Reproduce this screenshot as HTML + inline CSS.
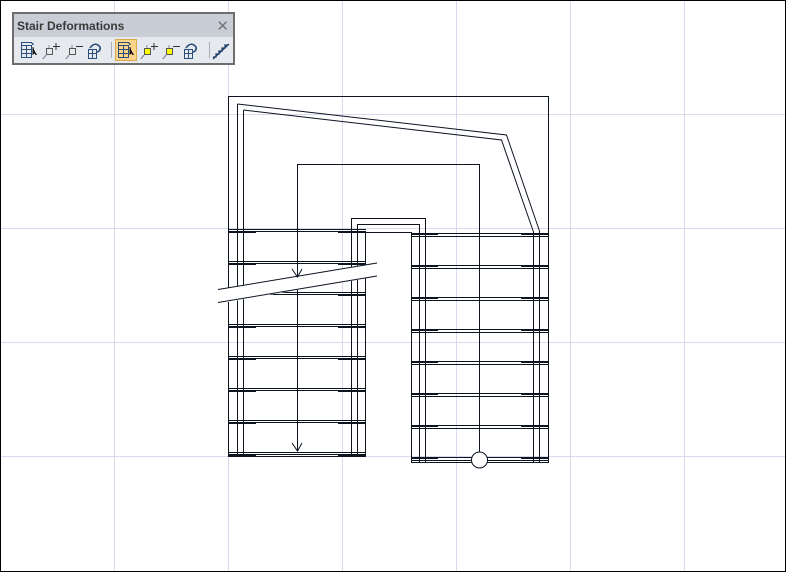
<!DOCTYPE html>
<html><head><style>
html,body{margin:0;padding:0;background:#fff;}
#c{position:absolute;left:0;top:0;width:786px;height:572px;}
#tb{position:absolute;left:12px;top:12px;width:219px;height:49px;border:2px solid #6e6e6e;background:#e6e9ee;}
#tt{position:absolute;left:0;top:0;width:219px;height:23px;background:#c9cdd6;font:bold 12px "Liberation Sans",sans-serif;color:#3a3a3a;line-height:25px;padding-left:3px;box-sizing:border-box;}
#x{position:absolute;right:4px;top:0;color:#777;font:15px "Liberation Sans",sans-serif;line-height:25px;}
</style></head><body>
<svg id="c" width="786" height="572" viewBox="0 0 786 572" shape-rendering="crispEdges">
<rect x="0.5" y="0.5" width="785" height="571" fill="#fff" stroke="#000"/>
<g stroke="#dcd8ee" stroke-width="1">
<line x1="114.5" y1="1" x2="114.5" y2="571"/><line x1="228.5" y1="1" x2="228.5" y2="571"/><line x1="342.5" y1="1" x2="342.5" y2="571"/><line x1="456.5" y1="1" x2="456.5" y2="571"/><line x1="570.5" y1="1" x2="570.5" y2="571"/><line x1="684.5" y1="1" x2="684.5" y2="571"/>
<line x1="1" y1="114.5" x2="785" y2="114.5"/><line x1="1" y1="228.5" x2="785" y2="228.5"/><line x1="1" y1="342.5" x2="785" y2="342.5"/><line x1="1" y1="456.5" x2="785" y2="456.5"/>
</g>
<g stroke="#0c1420" stroke-width="1" fill="none">
<polyline points="228.5,456 228.5,96.5 548.5,96.5 548.5,462"/>
<line x1="237.5" y1="104" x2="237.5" y2="456"/><line x1="243.5" y1="110" x2="243.5" y2="456"/>
<polyline shape-rendering="auto" points="237.5,104 506.5,135 539.5,231"/>
<polyline shape-rendering="auto" points="243.5,110 501.5,140 533.5,232"/>
<line x1="539.5" y1="231" x2="539.5" y2="462"/><line x1="533.5" y1="232" x2="533.5" y2="462"/>
<polyline points="351.5,456 351.5,218.5 425.5,218.5 425.5,462"/>
<polyline points="357.5,456 357.5,224.5 419.5,224.5 419.5,462"/>
<polyline points="365.5,456 365.5,232.5 411.5,232.5 411.5,462"/>
<polyline points="297.5,451 297.5,164.5 479.5,164.5 479.5,452"/>
<g id="lt">
<line x1="228" y1="229.5" x2="366" y2="229.5"/><line x1="228" y1="231.5" x2="366" y2="231.5"/>
<line x1="228" y1="232.5" x2="256" y2="232.5"/><line x1="338" y1="232.5" x2="366" y2="232.5"/>
</g>
<use href="#lt" y="32"/><use href="#lt" y="63"/><use href="#lt" y="95"/><use href="#lt" y="127"/><use href="#lt" y="159"/><use href="#lt" y="191"/><use href="#lt" y="223"/>
<line x1="228" y1="456.5" x2="366" y2="456.5"/>
<g id="rt">
<line x1="411" y1="233.5" x2="549" y2="233.5"/><line x1="411" y1="236.5" x2="549" y2="236.5"/>
<line x1="411" y1="234.5" x2="438" y2="234.5"/><line x1="521" y1="234.5" x2="549" y2="234.5"/>
</g>
<use href="#rt" y="32"/><use href="#rt" y="64"/><use href="#rt" y="96"/><use href="#rt" y="128"/><use href="#rt" y="160"/><use href="#rt" y="192"/><use href="#rt" y="224"/>
<line x1="411" y1="462.5" x2="549" y2="462.5"/>
<polygon points="210,291 380,262 380,276 210,305" fill="#fff" stroke="none"/>
<g shape-rendering="auto">
<line x1="218" y1="289.5" x2="377" y2="263"/>
<line x1="218" y1="302.5" x2="377" y2="276"/>
<polyline points="292,269 297.5,277 302,269"/>
<polyline points="292,443 297.5,451 302,443"/>
<circle cx="479.5" cy="460" r="8" fill="#fff"/>
</g>
</g>
</svg>
<div id="tb"><div id="tt">Stair Deformations<span id="x">✕</span></div>
<svg style="position:absolute;left:0;top:23px" width="219" height="26" viewBox="12 37 219 26" shape-rendering="crispEdges">
<rect x="113.5" y="39.5" width="21" height="21" fill="#fbd48a" stroke="#d9a94d"/>
<line x1="109.5" y1="42" x2="109.5" y2="58" stroke="#aab"/><line x1="207.5" y1="42" x2="207.5" y2="58" stroke="#aab"/>
<g fill="none" stroke="#2a4d7a" stroke-width="1.3">
<g id="i1"><rect x="19.5" y="45.5" width="10" height="12"/><line x1="19" y1="49.5" x2="30" y2="49.5"/><line x1="19" y1="53.5" x2="30" y2="53.5"/><line x1="24.5" y1="45" x2="24.5" y2="58"/><polyline points="19.5,45 19.5,42.5 29.5,42.5 31.5,45"/><path d="M31 47 l0 7 l1.5-1.5 l2 2.5" stroke="#111" fill="#111"/></g>
<use href="#i1" x="97"/>
<g stroke="#8890a0"><rect x="44.5" y="48.5" width="6" height="6" stroke="#555"/><path d="M44 55 l-3 4 M47 45 l0 3"/><path d="M54 43 v7 M51 46.5 h7" stroke="#333"/></g>
<g transform="translate(98,0)"><rect x="44.5" y="48.5" width="6" height="6" fill="#ff0" stroke="#555"/><path d="M44 55 l-3 4 M47 45 l0 3" stroke="#8890a0"/><path d="M54 43 v7 M51 46.5 h7" stroke="#333"/></g>
<g stroke="#8890a0"><rect x="67.5" y="48.5" width="6" height="6" stroke="#555"/><path d="M67 55 l-3 4 M70 45 l0 3"/><path d="M74 46.5 h7" stroke="#333"/></g>
<g transform="translate(97,0)"><rect x="67.5" y="48.5" width="6" height="6" fill="#ff0" stroke="#555"/><path d="M67 55 l-3 4 M70 45 l0 3" stroke="#8890a0"/><path d="M74 46.5 h7" stroke="#333"/></g>
<g id="i4"><rect x="86.5" y="49.5" width="8" height="9"/><line x1="86" y1="53.5" x2="95" y2="53.5"/><line x1="90.5" y1="49" x2="90.5" y2="59"/><path d="M88 48 q5-7 10-1 q1 4-3 5" shape-rendering="auto" stroke-width="1.6"/></g>
<use href="#i4" x="96"/>
<path d="M211 57 h3 v-3 h3 v-3 h3 v-3 h3 v-3 h3 M211 59 l16-15" stroke="#1c3e6a" shape-rendering="auto"/>
</g></svg>
</div>
</body></html>
